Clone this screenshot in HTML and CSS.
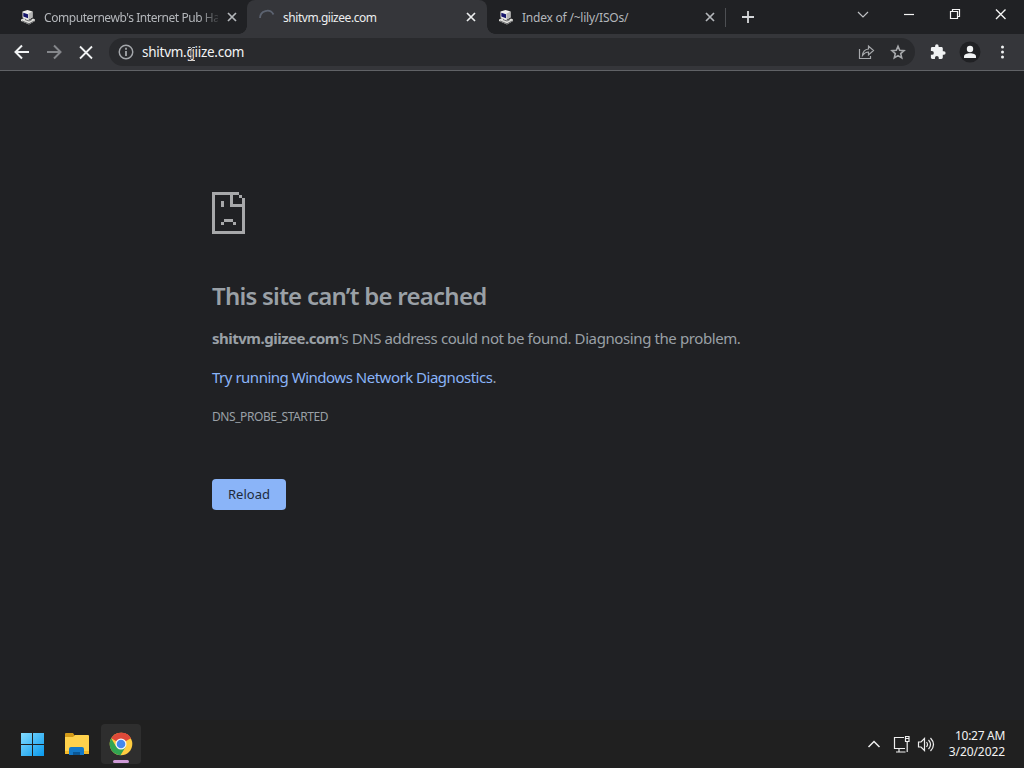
FILE: index.html
```html
<!DOCTYPE html>
<html lang="en">
<head>
<meta charset="utf-8">
<title>shitvm.giizee.com</title>
<link rel="stylesheet" href="styles.css">
</head>
<body>
<svg class="defs" width="0" height="0">
  <symbol id="pc" viewBox="0 0 16 16">
    <path d="M1 10.500l3-1.500 6 2 3-1.500 2 1v1.500l-6 3.500-8-3.500z" fill="#dededa"/>
    <path d="M2 12l7 2.800 5.500-3M5 10.500l4 1.500 3-1.500" stroke="#66676a" fill="none"/>
    <path d="M2.500 2.500l5-1.500 5 1.500v6l-4.500 2.500-5.500-2.500z" fill="#efefeb"/>
    <path d="M8.500 4.500l4-2v6l-4 2z" fill="#b5b5b5"/>
    <path d="M3.300 3.800l4.700 1.400v4L3.300 7.500z" fill="#17176c"/>
  </symbol>
  <symbol id="close" viewBox="0 0 10 10"><path d="M1 1l8 8M9 1L1 9" stroke="currentColor" stroke-width="1.7" fill="none"/></symbol>
</svg>
<header class="tabs">
  <div class="tab first">
    <svg class="favicon"><use href="#pc"/></svg>
    <span class="title faded">Computernewb's Internet Pub Ha</span>
    <svg class="close"><use href="#close"/></svg>
  </div>
  <div class="tab active">
    <svg class="favicon" viewBox="0 0 16 16"><path d="M1 9A7.2 7.2 0 0 1 14.5 5.5" fill="none" stroke="#5c6370" stroke-width="1.8"/></svg>
    <span class="title t2">shitvm.giizee.com</span>
    <svg class="close"><use href="#close"/></svg>
  </div>
  <div class="tab last">
    <svg class="favicon"><use href="#pc"/></svg>
    <span class="title t3">Index of /~lily/ISOs/</span>
    <svg class="close"><use href="#close"/></svg>
  </div>
  <svg class="plus" viewBox="0 0 12 12"><path d="M6 0v12M0 6h12" stroke="#d5d7da" stroke-width="1.8"/></svg>
  <svg class="controls" width="160" height="28" viewBox="0 0 160 28" fill="none" stroke="#f4f4f4" stroke-width="1.2">
    <path d="M9 12l5 5 5-5" stroke="#bfc1c4"/>
    <path d="M55 14.5h10"/>
    <path d="M101.500 11.500h7v7h-7zM103.500 11v-1.500h7v7H109"/>
    <path d="M147 9.500l9.500 9.500M156.500 9.500L147 19" stroke-width="1.4"/>
  </svg>
</header>
<nav class="toolbar">
  <svg class="navicons" width="100" height="28" viewBox="0 0 100 28" fill="none" stroke-width="2">
    <path d="M29 14H16M22 7.500L15.500 14l6.500 6.500" stroke="#f1f3f4"/>
    <path d="M47 14h13M54 7.500l6.500 6.500-6.500 6.500" stroke="#85878b"/>
    <path d="M80 8.500l12 12M92 8.500l-12 12" stroke="#f1f3f4" stroke-width="1.8"/>
  </svg>
  <div class="address">
    <svg class="info" viewBox="0 0 16 16" fill="none" stroke="#a4a7ab" stroke-width="1.3"><circle cx="8" cy="8" r="6"/><path d="M8 7v4.500M8 4.300v1.600" stroke-width="1.6"/></svg>
    <span class="url">shitvm.giize.com</span>
    <svg class="actions" width="60" height="28" viewBox="0 0 60 28" fill="none" stroke="#a7a9ac" stroke-width="1.2">
      <path d="M5.500 11v9.500h11V18M8.500 17.500q.5-6 6-6.500V8l5 4.500-5 4.500v-3q-3.500 0-6 3.500z"/>
      <path d="M44 8.300l1.700 4 4.300.4-3.300 2.900 1 4.300-3.700-2.300-3.700 2.300 1-4.300-3.300-2.900 4.300-.4z" stroke-width="1.6"/>
    </svg>
  </div>
  <svg class="menuicons" width="96" height="28" viewBox="0 0 96 28" fill="#f1f3f4">
    <path transform="translate(1.500 5.500) scale(.7)" d="M20.500 11H19V7c0-1.100-.9-2-2-2h-4V3.500a2.500 2.500 0 0 0-5 0V5H4a2 2 0 0 0-2 2v3.800h1.500a2.700 2.700 0 0 1 0 5.400H2V20c0 1.100.9 2 2 2h3.800v-1.500a2.700 2.700 0 0 1 5.400 0V22H17a2 2 0 0 0 2-2v-4h1.500a2.500 2.500 0 0 0 0-5z"/>
    <circle cx="42" cy="14" r="10.500" fill="#202124"/><circle cx="42" cy="11" r="3.200"/><path d="M36 20v-1.500c0-4.200 12-4.200 12 0V20z"/>
    <circle cx="74.500" cy="9" r="1.500"/><circle cx="74.500" cy="14" r="1.500"/><circle cx="74.500" cy="19" r="1.500"/>
  </svg>
  <svg class="cursor" width="9" height="18" viewBox="0 0 9 18" fill="none"><path d="M1 2.500h2.500l1 1 1-1H8M1 15.500h2.500l1-1 1 1H8" stroke="#d8d8d8"/><path d="M4 4v10" stroke="#d8d8d8"/><path d="M5 4v10" stroke="#33252a"/></svg>
</nav>
<main class="page">
  <svg class="sad" width="33" height="42" viewBox="0 0 11 14" fill="#a7a8aa" shape-rendering="crispEdges"><path d="M0 0h9v1H7v3h3V2h1v12H0zM1 1v12h9V5H6V1zM9 1h1v1H9zM3 3h1v2H3zM4 9h3v1H4zM3 10h1v1H3zM7 10h1v1H7z" fill-rule="evenodd"/></svg>
  <h1><span>This site can’t be reached</span></h1>
  <p class="message"><b>shitvm.giizee.com</b><span>'s DNS address could not be found. Diagnosing the problem.</span></p>
  <p class="diagnose"><a>Try running Windows Network Diagnostics</a>.</p>
  <p class="code">DNS_PROBE_STARTED</p>
  <button class="reload">Reload</button>
</main>
<footer class="taskbar">
  <svg class="start" width="24" height="24" viewBox="0 0 24 24">
    <defs><linearGradient id="win" x2="1" y2="1"><stop stop-color="#83dcff"/><stop offset="1" stop-color="#0899ed"/></linearGradient></defs>
    <path d="M1 1h11v11H1zM13 1h11v11H13zM1 13h11v11H1zM13 13h11v11H13z" fill="url(#win)"/>
  </svg>
  <svg class="folder" width="26" height="24" viewBox="0 0 26 24">
    <path d="M1 2q0-1 1-1h7l2 3v3H1z" fill="#d39a18"/><path d="M1 5h8l2-2h13q1 0 1 1v18H1z" fill="#ffd24c"/><path d="M1 19h24v3H1z" fill="#f4b928"/>
    <path d="M5 23v-6q0-2 2-2h11q2 0 2 2v6z" fill="#1479c8"/><path d="M9 23v-3h7v3z" fill="#0b5795"/>
  </svg>
  <div class="app">
    <svg width="24" height="24" viewBox="0 0 24 24">
      <circle cx="12" cy="12" r="11.300" fill="#ffcd40"/>
      <path d="M12 12L2.200 6.350A11.300 11.300 0 0 1 21.800 6.350z" fill="#de4939"/><path d="M12 6.500h9.900q-2-5.800-9.900-5.800z" fill="#de4939"/>
      <path d="M2.200 6.350A11.300 11.300 0 0 0 11.500 23.300L16.700 14.700 12 12 7.200 14.700z" fill="#32a552"/>
      <circle cx="12" cy="12" r="5.500" fill="#f5f6f7"/><circle cx="12" cy="12" r="4.300" fill="#4388ed"/>
    </svg>
    <i class="running"></i>
  </div>
  <svg class="tray" width="70" height="24" viewBox="0 0 70 24" fill="none" stroke="#ededed" stroke-width="1.2">
    <path d="M1.500 15l5.500-5.500 5.500 5.500" stroke-width="1.5"/>
    <path d="M37 5.500h-9.500v11H38M32 17v3M29 20h9.500M38.500 4.500h3.500v5h-3.500zM40.200 10v10M38.500 6.500H42"/>
    <path d="M51.500 10h2.500l3.500-3.500v12L54 15h-2.500zM59.500 10q2 2.500 0 5M61.500 8q4 4.500 0 9M63.500 6q6 6.500 0 13"/>
  </svg>
  <div class="clock"><span class="time">10:27 AM</span><span class="date">3/20/2022</span></div>
</footer>
</body>
</html>
```
FILE: styles.css
```css
* { box-sizing: border-box; }
body { margin: 0; width: 1024px; height: 768px; display: flex; flex-direction: column; overflow: hidden; background: #202124; font-family: "Noto Sans", "Open Sans", sans-serif; color: #9aa0a6; }
svg { flex: none; display: block; }
.defs { position: absolute; }
.tabs { height: 34px; display: flex; background: #202124; }
.tab { height: 34px; display: flex; align-items: center; color: #b4b7bb; font-size: 12px; white-space: nowrap; }
.first { width: 247px; padding: 0 10px 0 20px; }
.active { position: relative; width: 240px; padding: 0 11px 0 12px; background: #35363a; color: #eceeef; border-radius: 8px 8px 0 0; }
.active::before, .active::after { content: ""; position: absolute; bottom: 0; width: 8px; height: 8px; }
.active::before { left: -8px; background: radial-gradient(circle at 0 0, transparent 7.5px, #35363a 8px); }
.active::after { right: -8px; background: radial-gradient(circle at 100% 0, transparent 7.5px, #35363a 8px); }
.last { width: 239px; padding: 0 11px 0 11px; background: linear-gradient(#4d4f53, #4d4f53) right 8px / 1px 19px no-repeat; }
.favicon { width: 16px; height: 16px; margin-right: 8px; }
.title { flex: 1; letter-spacing: -.22px; }
.t2 { letter-spacing: -.46px; }
.faded { max-width: 174px; margin-right: 9px; letter-spacing: -.44px; mask-image: linear-gradient(90deg, #000 155px, transparent 178px); }
.close { width: 10px; height: 10px; }
.plus { width: 12px; height: 12px; margin: 11px 0 0 16px; }
.controls { margin-left: 95px; }
.toolbar { position: relative; height: 37px; display: flex; align-items: center; background: #35363a; border-bottom: 1px solid #606266; }
.navicons { margin-right: 9px; }
.address { width: 806px; height: 28px; display: flex; align-items: center; padding-left: 8px; border-radius: 14px; background: #292a2d; }
.info { width: 18px; height: 18px; margin-right: 7px; }
.url { flex: 1; color: #f3f4f5; font-size: 13.5px; letter-spacing: -.26px; }
.actions { margin-right: 1px; }
.menuicons { margin-left: 13px; }
.cursor { position: absolute; left: 187px; top: 11px; }
.page { flex: 1; display: flex; flex-direction: column; align-items: flex-start; padding: 121px 0 0 212px; white-space: nowrap; }
h1 { height: 32px; margin: 46px 0 0; font-size: 24px; line-height: 32px; font-weight: 600; letter-spacing: -.76px; }
p { margin: 0; }
.message { height: 24px; margin-top: 14px; font-size: 15px; line-height: 24px; letter-spacing: -.4px; }
.message b { letter-spacing: -.5px; }
.diagnose { height: 24px; margin-top: 15px; font-size: 15px; line-height: 24px; letter-spacing: -.49px; }
.diagnose a { color: #8ab4f8; }
.code { height: 20px; margin-top: 18px; font-size: 12px; line-height: 20px; letter-spacing: -.42px; }
.reload { width: 74px; height: 31px; margin-top: 52px; padding: 0 0 2px; border: 0; border-radius: 4px; background: #8ab4f8; color: #202b3c; font: 13px "Noto Sans", sans-serif; }
.taskbar { height: 48px; display: flex; align-items: center; background: #202020; color: #f2f2f2; }
.start { margin-left: 20px; }
.folder { margin-left: 20px; }
.app { position: relative; width: 40px; height: 40px; margin-left: 11px; display: flex; align-items: center; justify-content: center; border-radius: 4px; background: #2e2e2e; }
.running { position: absolute; bottom: 1px; left: 12px; width: 16px; height: 3px; border-radius: 2px; background: #cf9bd8; }
.tray { margin-left: 726px; }
.clock { flex: 1; display: flex; flex-direction: column; align-items: flex-end; padding-right: 19px; font-size: 12px; line-height: 16px; letter-spacing: -.3px; }
.date { letter-spacing: -.08px; }
```
